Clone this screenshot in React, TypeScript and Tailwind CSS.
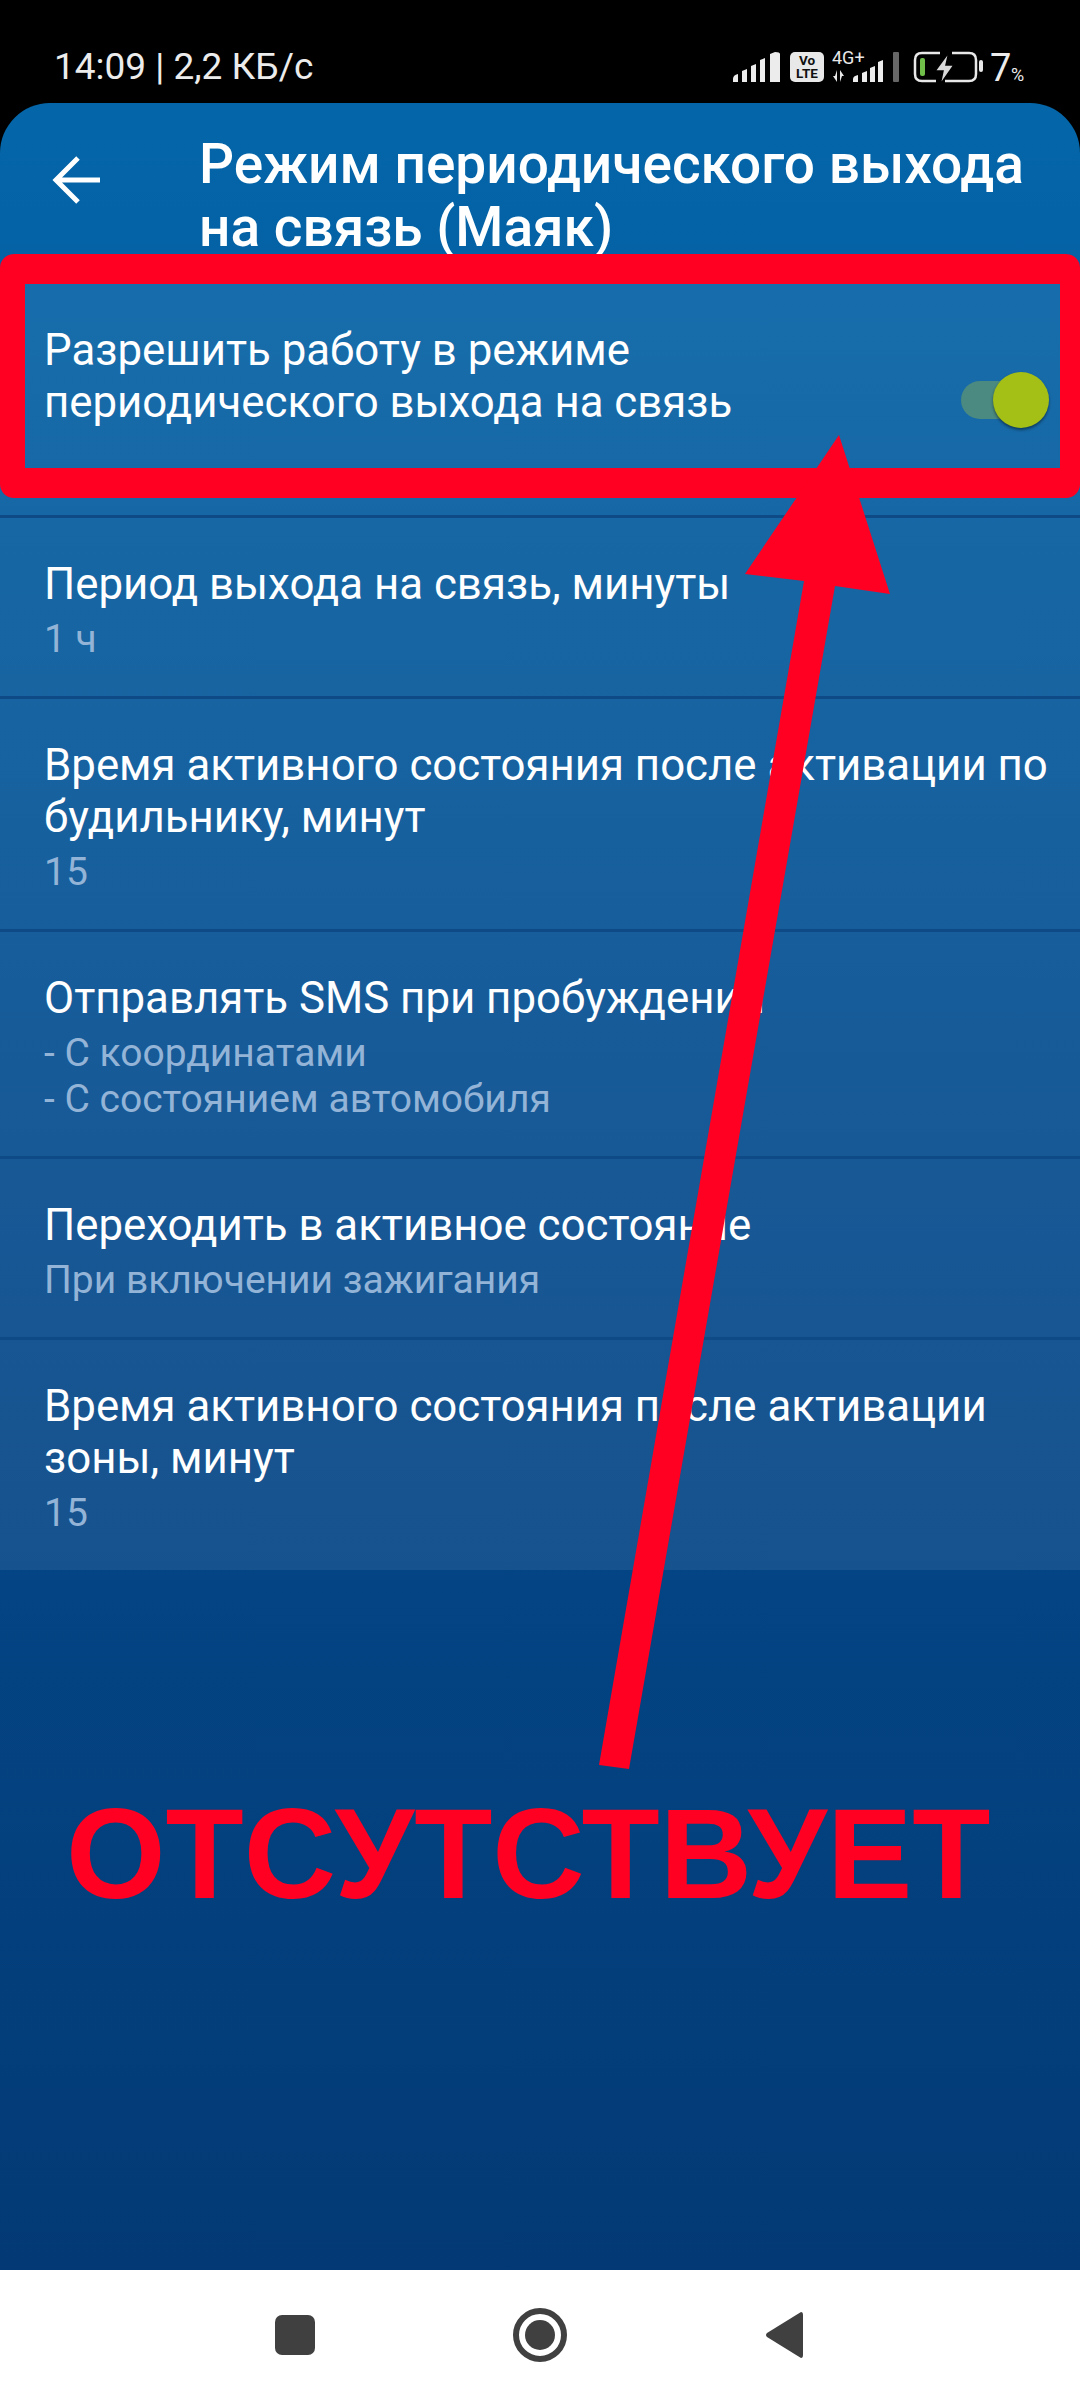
const rows = [
  { title: ['Период выхода на связь, минуты'], sub: ['1 ч'] },
  { title: ['Время активного состояния после активации по', 'будильнику, минут'], sub: ['15'] },
  { title: ['Отправлять SMS при пробуждении'], sub: ['- С координатами', '- С состоянием автомобиля'] },
  { title: ['Переходить в активное состояние'], sub: ['При включении зажигания'] },
  { title: ['Время активного состояния после активации', 'зоны, минут'], sub: ['15'] },
]

function StatusIcons() {
  return (
    <svg width="300" height="56" viewBox="730 40 300 56" className="block">
      {/* first sim */}
      <path d="M733 82v-3q0-4 5-5v8zM742 82V71l5-2v13zM751 82V66l5-2v18zM760 82V60l5-2v24zM770 82V54l5-2q5 0 5 2v28z" fill="#ececec" />
      <rect x="790" y="52" width="34" height="30" rx="5" fill="#e8e8e8" />
      <text x="807" y="65" textAnchor="middle" fontSize="13.5" fontWeight="700" fill="#111" fontFamily="Roboto, sans-serif">Vo</text>
      <text x="807" y="78" textAnchor="middle" fontSize="13.5" fontWeight="700" fill="#111" fontFamily="Roboto, sans-serif">LTE</text>
      {/* second sim */}
      <text x="832" y="64" fontSize="18" fill="#e8e8e8" fontFamily="Roboto, sans-serif">4G+</text>
      <path d="M837 70v12l-4-6h2zM840 82V70l4 6h-2z" fill="#e8e8e8" />
      <path d="M853 82v-3q0-3 5-4v7zM862 82V73l5-2v11zM870 82V68l5-2v16zM878 82V62l5-2v22z" fill="#ececec" />
      <rect x="893" y="52" width="6" height="30" rx="1" fill="#666" />
      {/* battery */}
      <path d="M940 53h-18q-7 0-7 7v14q0 7 7 7h14" fill="none" stroke="#e8e8e8" strokeWidth="2.5" />
      <path d="M952 53h17q7 0 7 7v14q0 7 -7 7h-24" fill="none" stroke="#e8e8e8" strokeWidth="2.5" />
      <rect x="920" y="58" width="5" height="18" rx="2" fill="#6fbf4a" />
      <path d="M949 52l-14 19h8l-3 14 14-20h-8z" fill="#d8d8d8" stroke="#000" strokeWidth="1.5" />
      <rect x="979" y="60" width="4" height="12" rx="2" fill="#e8e8e8" />
      <text x="990" y="81" fontSize="38" fill="#ececec" fontFamily="Roboto, sans-serif">7</text>
      <text x="1011" y="81" fontSize="18" fill="#ececec" fontFamily="Roboto, sans-serif">%</text>
    </svg>
  )
}

export default function App() {
  return (
    <div className="relative flex h-[2400px] w-[1080px] flex-col overflow-hidden bg-black font-['Roboto',sans-serif]">
      <div className="flex h-[103px] shrink-0 items-start justify-between pl-[54px] pr-[50px] pt-[44px]">
        <span className="text-[37px] leading-[46px] text-[#ececec]">14:09 | 2,2 КБ/с</span>
        <div className="-mt-[4px]">
          <StatusIcons />
        </div>
      </div>

      <div className="flex-1 rounded-t-[50px] bg-gradient-to-b from-[#0466a9] via-[#044a8d] via-50% to-[#033a75]">
        <div className="flex h-[181px] items-start">
          <svg width="199" height="160" viewBox="0 0 199 160" className="shrink-0" fill="none" stroke="#fff" strokeWidth="5" strokeLinejoin="miter">
            <path d="M100 77H57M78 55L56 77L78 99" />
          </svg>
          <h1 className="whitespace-nowrap pt-[30px] text-[55px] font-medium leading-[63px] text-white">
            Режим периодического выхода
            <br />
            на связь (Маяк)
          </h1>
        </div>

        <div className="flex h-[234px] items-start justify-between border-b-[3px] border-[#0e4a86] bg-white/[0.08] pl-[44px] pr-[31px]">
          <p className="pt-[40px] text-[43.8px] leading-[52px] text-white">
            Разрешить работу в режиме
            <br />
            периодического выхода на связь
          </p>
          <div className="relative mt-[88px] h-[56px] w-[88px]">
            <div className="absolute left-0 top-[9px] h-[38px] w-[74px] rounded-full bg-[#4a8a80]" />
            <div className="absolute right-0 top-0 h-[56px] w-[56px] rounded-full bg-[#a4bf16] shadow-[0_2px_3px_rgba(0,0,0,0.45)]" />
          </div>
        </div>

        {rows.map((row) => (
          <div key={row.title[0]} className="border-b-[3px] border-[#0e4a86] bg-white/[0.08] pb-[34px] pl-[44px] pt-[40px] last:border-b-0">
            {row.title.map((line) => (
              <p key={line} className="whitespace-nowrap text-[43.8px] leading-[52px] text-white">{line}</p>
            ))}
            <div className="mt-[6px]">
              {row.sub.map((line) => (
                <p key={line} className="text-[39px] leading-[46px] text-[#93b4d6]">{line}</p>
              ))}
            </div>
          </div>
        ))}
      </div>

      <div className="flex h-[130px] shrink-0 items-center bg-white">
        <div className="flex w-full items-center justify-between pl-[275px] pr-[277px]">
          <div className="h-[40px] w-[40px] rounded-[7px] bg-[#404040]" />
          <div className="flex h-[54px] w-[54px] items-center justify-center rounded-full border-[6px] border-[#404040]">
            <div className="h-[30px] w-[30px] rounded-full bg-[#404040]" />
          </div>
          <svg width="38" height="48" viewBox="0 0 38 48" fill="#404040">
            <path d="M36 1 Q38 1 38 4V44Q38 47 36 47L2 26Q0 24 2 22Z" />
          </svg>
        </div>
      </div>

      {/* annotation painted on top of the screenshot */}
      <div className="absolute left-0 top-[254px] h-[244px] w-[1080px] rounded-[14px] border-[30px] border-r-[20px] border-l-[25px] border-[#ff0022]" />
      <svg className="absolute left-0 top-0" width="1080" height="2400" viewBox="0 0 1080 2400" fill="#ff0022">
        <path d="M839 435L890 594L835 586L629 1769L599 1765L804 581L745 574Z" />
      </svg>
      <div className="absolute left-[66px] top-[1780px] whitespace-nowrap font-['Liberation_Sans',sans-serif] text-[128px] font-bold leading-[148px] text-[#ff0022]">
        ОТСУТСТВУЕТ
      </div>
    </div>
  )
}
